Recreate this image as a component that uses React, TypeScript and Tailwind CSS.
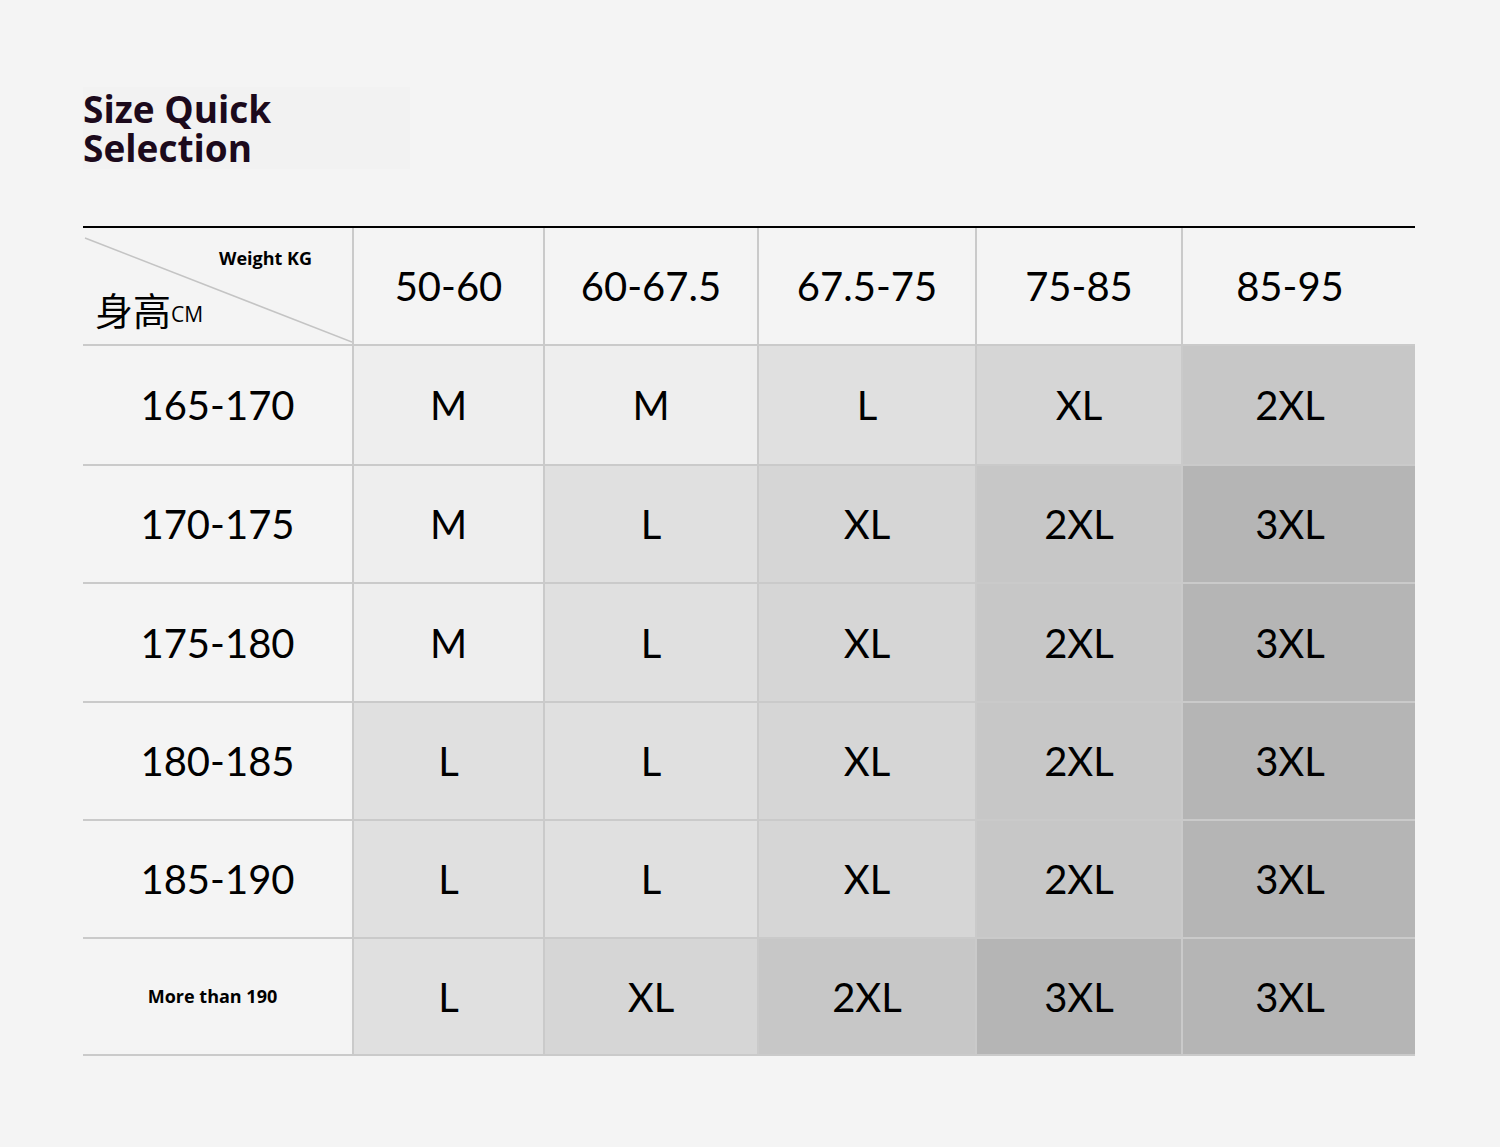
const cols = ['50-60', '60-67.5', '67.5-75', '75-85', '85-95'];

const rows: { h: string; small?: boolean; height: string; sizes: string[] }[] = [
  { h: '165-170', height: 'h-[120px]', sizes: ['M', 'M', 'L', 'XL', '2XL'] },
  { h: '170-175', height: 'h-[118px]', sizes: ['M', 'L', 'XL', '2XL', '3XL'] },
  { h: '175-180', height: 'h-[119px]', sizes: ['M', 'L', 'XL', '2XL', '3XL'] },
  { h: '180-185', height: 'h-[118px]', sizes: ['L', 'L', 'XL', '2XL', '3XL'] },
  { h: '185-190', height: 'h-[118px]', sizes: ['L', 'L', 'XL', '2XL', '3XL'] },
  { h: 'More than 190', small: true, height: 'h-[117px]', sizes: ['L', 'XL', '2XL', '3XL', '3XL'] },
];

const shade: Record<string, string> = {
  M: 'bg-[#eeeeee]',
  L: 'bg-[#e0e0e0]',
  XL: 'bg-[#d6d6d6]',
  '2XL': 'bg-[#c7c7c7]',
  '3XL': 'bg-[#b5b5b5]',
};

const num = { fontFamily: 'Lato, "Noto Sans", sans-serif' };
const bold = { fontFamily: '"Open Sans", "Noto Sans", sans-serif' };

export default function App() {
  return (
    <div className="min-h-[1147px] w-[1500px] bg-[#f4f4f4] pt-[87px] pl-[83px]">
      <div className="w-[327px] bg-[#f2f2f2] py-[2px]">
        <h1
          className="text-[37px] font-bold leading-[39px] text-[#1c0a1c]"
          style={bold}
        >
          Size Quick
          <br />
          Selection
        </h1>
      </div>

      <div className="mt-[57px] grid w-[1332px] grid-cols-[271px_191px_214px_218px_206px_232px] border-t-2 border-black text-black">
        {/* corner */}
        <div className="relative flex h-[118px] flex-col justify-between border-r-2 border-b-2 border-[#cacaca] pt-[21px] pr-[40px] pb-[16px] pl-[12px]">
          <svg className="absolute inset-0 h-full w-full" preserveAspectRatio="none" viewBox="0 0 269 116">
            <line x1="2" y1="10" x2="269" y2="114" stroke="#c4c4c4" strokeWidth="1.5" />
          </svg>
          <div className="self-end text-[18px] font-bold leading-none" style={bold}>
            Weight KG
          </div>
          <div className="flex items-end leading-none">
            <span className="text-[38px]" style={{ fontFamily: '"Noto Sans CJK SC", sans-serif' }}>
              身高
            </span>
            <span className="mb-[3px] text-[21px]" style={bold}>
              CM
            </span>
          </div>
        </div>
        {cols.map((c, i) => (
          <div
            key={c}
            className={`flex h-[118px] items-center justify-center border-b-2 border-[#cacaca] text-[40px] ${
              i < cols.length - 1 ? 'border-r-2' : 'pr-[18px]'
            }`}
            style={num}
          >
            {c}
          </div>
        ))}

        {rows.map((r) => (
          <div key={r.h} className="contents">
            <div
              className={`flex ${r.height} items-center justify-center border-r-2 border-b-2 border-[#cacaca]`}
              style={r.small ? bold : num}
            >
              {r.small ? (
                <span className="mr-[10px] text-[18px] font-bold">{r.h}</span>
              ) : (
                <span className="text-[40px]">{r.h}</span>
              )}
            </div>
            {r.sizes.map((s, i) => (
              <div
                key={i}
                className={`flex ${r.height} items-center justify-center border-b-2 border-[#cacaca] text-[40px] ${shade[s]} ${
                  i < r.sizes.length - 1 ? 'border-r-2' : 'pr-[18px]'
                }`}
                style={num}
              >
                {s}
              </div>
            ))}
          </div>
        ))}
      </div>
    </div>
  );
}
